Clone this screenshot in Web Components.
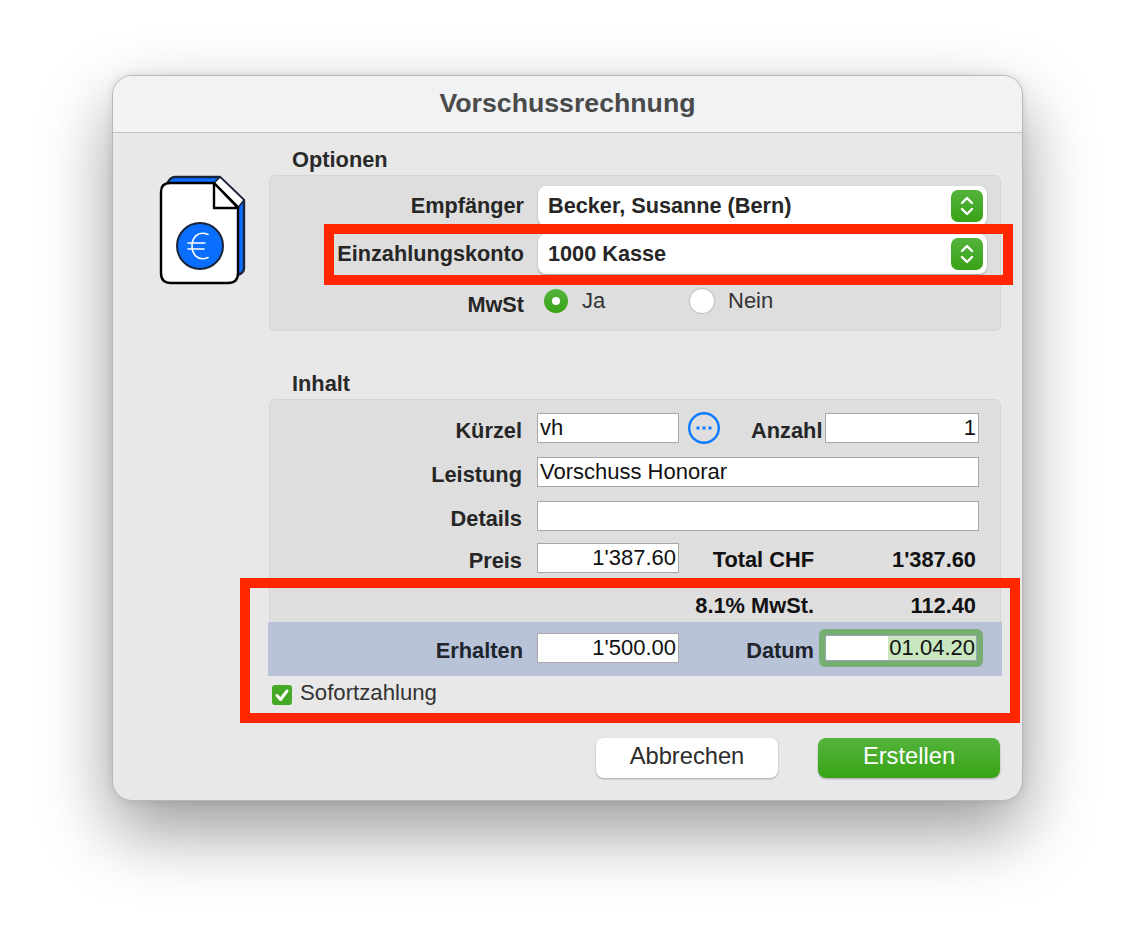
<!DOCTYPE html>
<html lang="de">
<head>
<meta charset="utf-8">
<title>Vorschussrechnung</title>
<style>
  html, body { margin: 0; background: #fff; }
  body { font-family: "Liberation Sans", Arial, sans-serif; color: #262626; padding: 75px 0 0 112px; height: 873px; overflow: hidden; }
</style>
</head>
<body>
<mac-window heading="Vorschussrechnung">
  <doc-icon slot="icon"></doc-icon>

  <group-box heading="Optionen">
    <option-row label="Empfänger"><popup-select>Becker, Susanne (Bern)</popup-select></option-row>
    <option-row label="Einzahlungskonto"><popup-select>1000 Kasse</popup-select></option-row>
    <option-row label="MwSt" radios>
      <radio-button checked>Ja</radio-button>
      <radio-button>Nein</radio-button>
    </option-row>
  </group-box>

  <group-box heading="Inhalt" content>
    <field-row label="Kürzel">
      <text-field style="width:142px">vh</text-field>
      <more-button></more-button>
      <field-label style="margin-left:31px;width:74px">Anzahl</field-label>
      <text-field style="width:154px" align="right">1</text-field>
    </field-row>
    <field-row label="Leistung"><text-field style="width:442px">Vorschuss Honorar</text-field></field-row>
    <field-row label="Details"><text-field style="width:442px"></text-field></field-row>
    <field-row label="Preis" style="margin-top:-2px">
      <text-field style="width:142px" align="right">1'387.60</text-field>
      <total-line label="Total CHF" value="1'387.60"></total-line>
    </field-row>
    <total-line style="margin:3px 0 4px 409px" label="8.1% MwSt." value="112.40"></total-line>
    <pay-band>
      <field-label style="width:255px;text-align:right;margin-right:14px">Erhalten</field-label>
      <text-field style="width:142px" align="right">1'500.00</text-field>
      <field-label style="width:135px;text-align:right;margin-right:11px">Datum</field-label>
      <text-field style="width:152px;height:26px" align="right" focused>01.04.20</text-field>
    </pay-band>
  </group-box>

  <check-box slot="after">Sofortzahlung</check-box>

  <push-button slot="actions">Abbrechen</push-button>
  <push-button slot="actions" primary>Erstellen</push-button>

  <red-mark slot="marks" style="left:211px;top:148px;width:689px;height:61px"></red-mark>
  <red-mark slot="marks" style="left:127px;top:502px;width:780px;height:145px"></red-mark>
</mac-window>

<script>
class MacWindow extends HTMLElement {
  constructor() {
    super();
    this.attachShadow({ mode: "open" });
  }

  connectedCallback() {
    this.shadowRoot.innerHTML = /* html */`
    <style>
      :host {
        display: block;
        position: relative;
        box-sizing: border-box;
        width: 911px;
        height: 726px;
        background: #e8e8e8;
        border: 1px solid #b8b8b8;
        border-radius: 20px;
        box-shadow: 0 30px 70px rgba(0, 0, 0, .4), 0 0 8px rgba(0, 0, 0, .1);
      }
      header {
        height: 56px;
        line-height: 54px;
        text-align: center;
        font-size: 26.7px;
        font-weight: bold;
        color: #4a4a4a;
        background: #f1f2f4;
        border-bottom: 1px solid #c4c4c4;
        border-radius: 19px 19px 0 0;
      }
      main { display: flex; }
      aside { width: 156px; flex: none; padding: 32px 0 0 37px; box-sizing: border-box; }
      section { width: 732px; flex: none; padding-top: 15px; }
      .after { margin: 9px 0 0 3px; }
      .actions { display: flex; justify-content: flex-end; gap: 40px; margin: 33px 1px 0 0; }
    </style>
    <header>${this.getAttribute("heading")}</header>
    <main>
      <aside><slot name="icon"></slot></aside>
      <section>
        <slot></slot>
        <div class="after"><slot name="after"></slot></div>
        <div class="actions"><slot name="actions"></slot></div>
      </section>
    </main>
    <slot name="marks"></slot>
    `;
  }
}

class DocIcon extends HTMLElement {
  constructor() {
    super();
    this.attachShadow({ mode: "open" });
  }

  connectedCallback() {
    this.shadowRoot.innerHTML = /* html */`
    <style>:host { display: block; width: 110px; height: 130px; } svg { display: block; }</style>
    <svg width="110" height="130" viewBox="0 0 110 130" fill="none" stroke-linejoin="round">
      <path d="M25 12 Q20 12 17 19 L80 100 L88 110 Q94 108 94 103 V35 L70 12Z" fill="#0a6eff" stroke="#1c2438" stroke-width="2.4"/>
      <path d="M70 12 L94 35 L87 44 L64 18Z" fill="#fff" stroke="#1c2438" stroke-width="1.6"/>
      <path d="M20 18 H64 L88 42 V108 Q88 118 78 118 H21 Q11 118 11 108 V27 Q11 18 20 18Z" fill="#fff" stroke="#000" stroke-width="2.4"/>
      <path d="M64 18 V43 H88Z" fill="#fff" stroke="#000" stroke-width="2.4"/>
      <circle cx="50" cy="81" r="23" fill="#0a6eff" stroke="#1c2438" stroke-width="2"/>
      <path d="M58 69.5 C47 65 42 74 42 81 C42 88 47 97 58 92.5 M38 78 H55 M38 84 H54" stroke="#fff" stroke-width="1.6" stroke-linecap="round"/>
    </svg>
    `;
  }
}

class GroupBox extends HTMLElement {
  constructor() {
    super();
    this.attachShadow({ mode: "open" });
  }

  connectedCallback() {
    const content = this.hasAttribute("content");
    this.shadowRoot.innerHTML = /* html */`
    <style>
      :host { display: block; }
      h2 { margin: 0 0 3px 23px; font-size: 21.8px; line-height: 24px; font-weight: bold; color: #2a2a2a; }
      .box {
        box-sizing: border-box;
        background: #dedede;
        border: 1px solid #d5d5d5;
        border-radius: 6px;
        height: ${content ? "auto" : "156px"};
        margin-bottom: ${content ? "0" : "41px"};
        padding-top: ${content ? "13px" : "10px"};
        display: flex;
        flex-direction: column;
        gap: ${content ? "14px" : "8px"};
      }
    </style>
    <h2>${this.getAttribute("heading")}</h2>
    <div class="box"><slot></slot></div>
    `;
  }
}

class OptionRow extends HTMLElement {
  constructor() {
    super();
    this.attachShadow({ mode: "open" });
  }

  connectedCallback() {
    const radios = this.hasAttribute("radios");
    this.shadowRoot.innerHTML = /* html */`
    <style>
      :host { display: grid; grid-template-columns: 254px 1fr; column-gap: ${radios ? "20px" : "14px"}; align-items: center; margin-top: ${radios ? "2px" : "0"}; }
      label { text-align: right; font-size: 21.7px; font-weight: bold; ${radios ? "padding-top: 8px;" : ""} }
      div { display: flex; }
    </style>
    <label>${this.getAttribute("label")}</label>
    <div><slot></slot></div>
    `;
  }
}

class PopupSelect extends HTMLElement {
  constructor() {
    super();
    this.attachShadow({ mode: "open" });
  }

  connectedCallback() {
    this.shadowRoot.innerHTML = /* html */`
    <style>
      :host {
        display: flex;
        align-items: center;
        justify-content: space-between;
        box-sizing: border-box;
        width: 449px;
        height: 40px;
        padding: 0 4px 0 10px;
        background: #fff;
        border-radius: 8px;
        box-shadow: 0 1px 2px rgba(0, 0, 0, .3);
        font-size: 21.7px;
        font-weight: bold;
        color: #262626;
      }
      svg { display: block; }
    </style>
    <span><slot></slot></span>
    <svg width="32" height="32" viewBox="0 0 32 32" fill="none">
      <defs><linearGradient id="g" x1="0" y1="0" x2="0" y2="1"><stop offset="0" stop-color="#54b33c"/><stop offset="1" stop-color="#38a316"/></linearGradient></defs>
      <rect width="32" height="32" rx="7" fill="url(#g)"/>
      <path d="M11 13 L16 8 L21 13 M11 19 L16 24 L21 19" stroke="#fff" stroke-width="2.4" stroke-linecap="round" stroke-linejoin="round"/>
    </svg>
    `;
  }
}

class RadioButton extends HTMLElement {
  constructor() {
    super();
    this.attachShadow({ mode: "open" });
  }

  connectedCallback() {
    const checked = this.hasAttribute("checked");
    this.shadowRoot.innerHTML = /* html */`
    <style>
      :host { display: flex; align-items: center; gap: 14px; width: 146px; font-size: 22px; color: #333; }
      i {
        width: 24px;
        height: 24px;
        box-sizing: border-box;
        border-radius: 50%;
        display: grid;
        place-items: center;
        background: ${checked ? "linear-gradient(#54b33c, #38a316)" : "#fff"};
        box-shadow: ${checked ? "none" : "0 0 1px 1px rgba(0, 0, 0, .14)"};
      }
      i::after { content: ""; width: 8px; height: 8px; border-radius: 50%; background: ${checked ? "#fff" : "transparent"}; }
    </style>
    <i></i><span><slot></slot></span>
    `;
  }
}

class FieldRow extends HTMLElement {
  constructor() {
    super();
    this.attachShadow({ mode: "open" });
  }

  connectedCallback() {
    this.shadowRoot.innerHTML = /* html */`
    <style>
      :host { display: grid; grid-template-columns: 252px 1fr; column-gap: 15px; align-items: center; }
      label { text-align: right; font-size: 21.8px; line-height: 24px; font-weight: bold; padding-top: 6px; }
      div { display: flex; align-items: center; }
    </style>
    <label>${this.getAttribute("label")}</label>
    <div><slot></slot></div>
    `;
  }
}

class FieldLabel extends HTMLElement {
  constructor() {
    super();
    this.attachShadow({ mode: "open" });
  }

  connectedCallback() {
    this.shadowRoot.innerHTML = /* html */`
    <style>:host { display: block; flex: none; font-size: 21.8px; line-height: 24px; font-weight: bold; padding-top: 6px; }</style>
    <slot></slot>
    `;
  }
}

class TextField extends HTMLElement {
  constructor() {
    super();
    this.attachShadow({ mode: "open" });
  }

  connectedCallback() {
    const focused = this.hasAttribute("focused");
    const right = this.getAttribute("align") === "right";
    this.shadowRoot.innerHTML = /* html */`
    <style>
      :host {
        display: block;
        flex: none;
        box-sizing: border-box;
        height: 30px;
        background: #fff;
        border: 1px solid ${focused ? "#9aa6b8" : "#a8a8a8"};
        font-size: 22px;
        line-height: 27px;
        color: #111;
        white-space: nowrap;
        padding: 0 ${right ? "2px" : "0"} 0 ${right ? "0" : "2px"};
        text-align: ${right ? "right" : "left"};
        ${focused ? "line-height: 24px; padding-right: 0; border-radius: 2px; box-shadow: 0 0 0 6px #78ae72;" : ""}
      }
      span { ${focused ? "display: inline-block; padding: 0 1px; background: #c8e6c0;" : ""} }
    </style>
    <span><slot></slot></span>
    `;
  }
}

class MoreButton extends HTMLElement {
  constructor() {
    super();
    this.attachShadow({ mode: "open" });
  }

  connectedCallback() {
    this.shadowRoot.innerHTML = /* html */`
    <style>:host { display: block; flex: none; margin: -1px 0 -1px 9px; } svg { display: block; }</style>
    <svg width="32" height="32" viewBox="0 0 32 32" fill="none">
      <circle cx="16" cy="16" r="14.8" stroke="#0a7aff" stroke-width="2.4"/>
      <rect x="8.5" y="14.5" width="3" height="3" fill="#0a7aff"/>
      <rect x="14.5" y="14.5" width="3" height="3" fill="#0a7aff"/>
      <rect x="20.5" y="14.5" width="3" height="3" fill="#0a7aff"/>
    </svg>
    `;
  }
}

class TotalLine extends HTMLElement {
  constructor() {
    super();
    this.attachShadow({ mode: "open" });
  }

  connectedCallback() {
    this.shadowRoot.innerHTML = /* html */`
    <style>
      :host { display: grid; grid-template-columns: 135px 162px; font-size: 21.8px; font-weight: bold; color: #111; text-align: right; line-height: 24px; padding-top: 4px; white-space: nowrap; }
    </style>
    <span>${this.getAttribute("label")}</span><span>${this.getAttribute("value")}</span>
    `;
  }
}

class PayBand extends HTMLElement {
  constructor() {
    super();
    this.attachShadow({ mode: "open" });
  }

  connectedCallback() {
    this.shadowRoot.innerHTML = /* html */`
    <style>
      :host {
        display: flex;
        align-items: center;
        box-sizing: border-box;
        height: 54px;
        padding-bottom: 2px;
        margin: -14px -2px -1px;
        background: #b9c3d7;
        color: #20242c;
      }
    </style>
    <slot></slot>
    `;
  }
}

class CheckBox extends HTMLElement {
  constructor() {
    super();
    this.attachShadow({ mode: "open" });
  }

  connectedCallback() {
    this.shadowRoot.innerHTML = /* html */`
    <style>
      :host { display: flex; align-items: center; gap: 8px; font-size: 22.2px; color: #333; height: 20px; }
      svg { display: block; flex: none; }
      span { position: relative; top: -2px; }
    </style>
    <svg width="20" height="20" viewBox="0 0 20 20" fill="none">
      <rect width="20" height="20" rx="3" fill="#45a926"/>
      <path d="M5 10.5 L8.5 14.5 L15 6" stroke="#fff" stroke-width="3" stroke-linecap="round" stroke-linejoin="round"/>
    </svg>
    <span><slot></slot></span>
    `;
  }
}

class PushButton extends HTMLElement {
  constructor() {
    super();
    this.attachShadow({ mode: "open" });
  }

  connectedCallback() {
    const primary = this.hasAttribute("primary");
    this.shadowRoot.innerHTML = /* html */`
    <style>
      :host {
        display: block;
        width: 182px;
        height: 40px;
        line-height: 36px;
        text-align: center;
        font-size: 23.7px;
        border-radius: 8px;
        background: ${primary ? "linear-gradient(#54b33c, #38a316)" : "#fff"};
        color: ${primary ? "#fff" : "#2b2b2b"};
        box-shadow: 0 1px 2px rgba(0, 0, 0, .3);
      }
    </style>
    <slot></slot>
    `;
  }
}

class RedMark extends HTMLElement {
  constructor() {
    super();
    this.attachShadow({ mode: "open" });
  }

  connectedCallback() {
    this.shadowRoot.innerHTML = /* html */`
    <style>
      :host { display: block; position: absolute; box-sizing: border-box; border: 10px solid #ff2600; pointer-events: none; }
    </style>
    `;
  }
}

customElements.define("mac-window", MacWindow);
customElements.define("doc-icon", DocIcon);
customElements.define("group-box", GroupBox);
customElements.define("option-row", OptionRow);
customElements.define("popup-select", PopupSelect);
customElements.define("radio-button", RadioButton);
customElements.define("field-row", FieldRow);
customElements.define("field-label", FieldLabel);
customElements.define("text-field", TextField);
customElements.define("more-button", MoreButton);
customElements.define("total-line", TotalLine);
customElements.define("pay-band", PayBand);
customElements.define("check-box", CheckBox);
customElements.define("push-button", PushButton);
customElements.define("red-mark", RedMark);
</script>
</body>
</html>
